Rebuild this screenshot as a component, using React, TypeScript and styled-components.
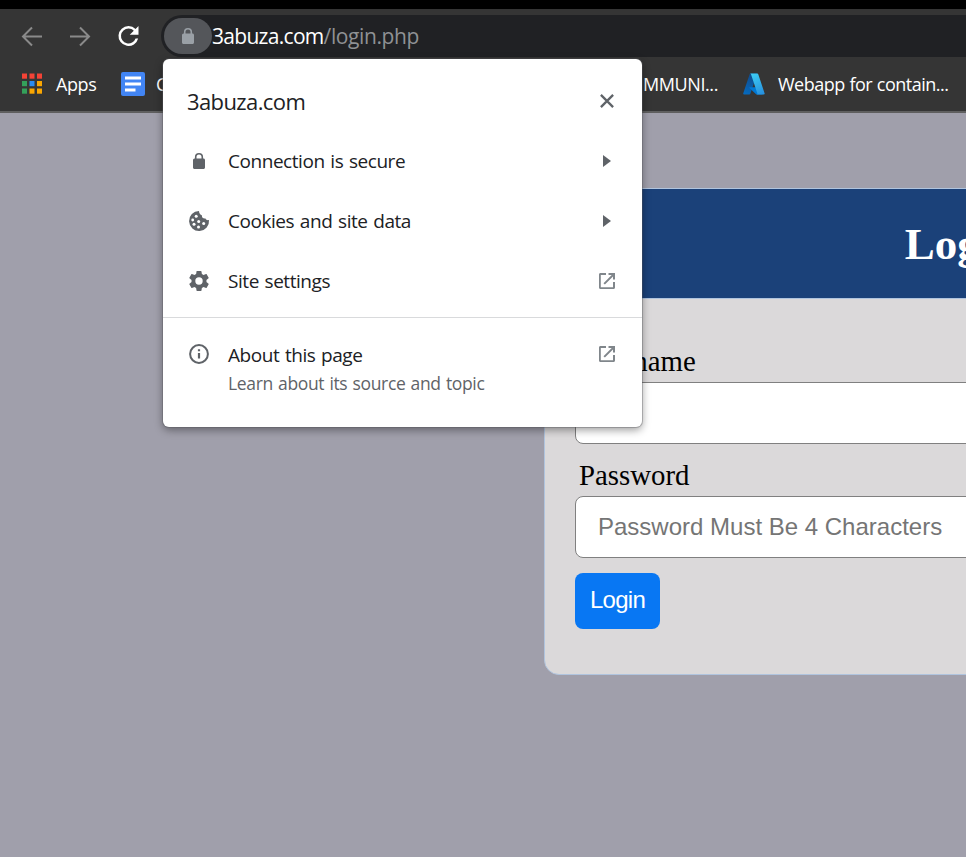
import React from "react";
import styled, { createGlobalStyle } from "styled-components";

const GlobalStyle = createGlobalStyle`
  *, *::before, *::after { box-sizing: border-box; }
  body { margin: 0; overflow: hidden; background: #a09fab; }
  svg { display: block; flex: none; }
`;

const Screen = styled.div`
  position: relative;
  display: flex;
  flex-direction: column;
  width: 966px;
  height: 857px;
  overflow: hidden;
  background: #a09fab;
  font-family: "Open Sans", "Noto Sans", sans-serif;
`;

const TitleStrip = styled.div`
  flex: none;
  height: 9px;
  background: #000;
`;

const Toolbar = styled.div`
  flex: none;
  display: flex;
  height: 48px;
  padding-top: 6px;
  background: #353535;
`;

const NavButtons = styled.div`
  display: flex;
  align-items: center;
  gap: 24px;
  width: 161px;
  padding: 0 0 1px 20px;
`;

const AddressBar = styled.div`
  flex: 1;
  display: flex;
  align-items: center;
  padding-left: 3px;
  background: #202124;
  border-radius: 21px 0 0 21px;
`;

const SiteChip = styled.div`
  display: flex;
  align-items: center;
  justify-content: center;
  width: 48px;
  height: 36px;
  border-radius: 18px;
  background: #54565a;
`;

const Text = styled.span<{ $size: number; $spacing?: number; $word?: number; $color?: string }>`
  font-size: ${(p) => p.$size}px;
  letter-spacing: ${(p) => p.$spacing ?? 0}px;
  word-spacing: ${(p) => p.$word ?? 0}px;
  color: ${(p) => p.$color ?? "#202124"};
  white-space: nowrap;
`;

const Bookmarks = styled.div`
  flex: none;
  display: flex;
  align-items: center;
  height: 56px;
  padding-left: 20px;
  background: #353535;
  border-bottom: 2px solid #5f5f5f;
`;

const Bookmark = styled.div<{ $width: number; $gap?: number }>`
  flex: none;
  display: flex;
  align-items: center;
  gap: ${(p) => p.$gap ?? 12}px;
  width: ${(p) => p.$width}px;
`;

const PushedBookmark = styled(Bookmark)`
  justify-content: flex-end;
  padding-right: 25px;
`;

const Page = styled.main`
  flex: 1;
  padding: 75px 0 0 544px;
`;

const Card = styled.section`
  width: 834px;
  height: 487px;
  background: #dbd9da;
  border: 1px solid #b0c4de;
  border-radius: 0 0 15px 15px;
  font-family: "Liberation Serif", serif;
`;

const CardHeader = styled.h2`
  display: flex;
  align-items: center;
  justify-content: center;
  height: 110px;
  margin: 0;
  border-bottom: 1px solid #b0c4de;
  background: #1b4179;
  color: #fff;
  font-size: 45px;
`;

const Form = styled.div`
  display: flex;
  flex-direction: column;
  align-items: flex-start;
  padding: 46px 30px 0;
`;

const Field = styled.label`
  display: flex;
  flex-direction: column;
  width: 100%;
  margin-bottom: 15px;
`;

const FieldName = styled.span`
  height: 37px;
  padding-left: 4px;
  font-size: 28.8px;
  line-height: 33px;
  color: #000;
`;

const Input = styled.input`
  width: 100%;
  height: 62px;
  padding: 0 22px;
  border: 1px solid #808080;
  border-radius: 8px;
  background: #fff;
  font: 24px "Liberation Sans", sans-serif;
  &::placeholder { color: #757575; }
`;

const LoginButton = styled.button`
  width: 85px;
  height: 56px;
  padding: 0 0 2px;
  border: 0;
  border-radius: 8px;
  background: #0877f3;
  color: #fff;
  font: 24px "Liberation Sans", sans-serif;
  letter-spacing: -0.7px;
`;

const Popup = styled.aside`
  position: absolute;
  left: 163px;
  top: 59px;
  width: 479px;
  height: 368px;
  background: #fff;
  border-radius: 6px;
  box-shadow: 0 0 0 1px rgba(90, 90, 95, 0.35), 0 3px 8px rgba(0, 0, 0, 0.4);
`;

const PopupTitle = styled.div`
  display: flex;
  align-items: center;
  justify-content: space-between;
  height: 72px;
  padding: 11px 28px 0 24px;
`;

const MenuRow = styled.div`
  display: grid;
  grid-template-columns: 24px 1fr 24px;
  column-gap: 18px;
  align-items: center;
  height: 60px;
  padding: 0 23px 0 24px;
`;

const AboutRow = styled(MenuRow)`
  & > svg { margin-bottom: 2px; }
`;

const RowText = styled(Text).attrs({ $size: 19, $spacing: -0.45, $word: 1.2 })`
  margin-left: -1px;
`;

const Divider = styled.div`
  height: 1px;
  margin-top: 6px;
  background: #d9dadc;
`;

const AboutSection = styled.div`
  padding-top: 7px;
`;

const Subline = styled.div`
  display: flex;
  margin-top: -14px;
  padding-left: 65px;
`;

const Centered = styled.span`
  display: flex;
  justify-content: center;
`;

const Arrow = ({ back }: { back?: boolean }) => (
  <svg width="24" height="24" viewBox="0 0 24 24" fill="none" stroke="#8a8a8a" strokeWidth="2">
    {back ? <path d="M22 12.500H3.500M12 3.500L3 12.500L12 21.500" /> : <path d="M2 12.500H20.500M12 3.500L21 12.500L12 21.500" />}
  </svg>
);

const Reload = () => (
  <svg width="25" height="30" viewBox="2 0 20 24" fill="#fff">
    <path d="M17.650 6.350A7.960 7.960 0 0 0 12 4a8 8 0 1 0 7.730 10h-2.080A6 6 0 1 1 12 6c1.660 0 3.140.69 4.220 1.780L13 11h7V4z" />
  </svg>
);

const Lock = ({ color }: { color: string }) => (
  <svg width="24" height="24" viewBox="0 0 24 24" fill={color}>
    <path d="M16.500 9.400h-.4V8a4.100 4.100 0 0 0-8.200 0v1.400h-.4A1.500 1.500 0 0 0 6 10.900v7.600c0 .8.700 1.500 1.500 1.500h9c.8 0 1.500-.7 1.500-1.500v-7.600c0-.8-.7-1.500-1.500-1.500zM9.500 9.400V8a2.500 2.500 0 0 1 5 0v1.400z" />
  </svg>
);

const appColors = ["#f44336", "#f44336", "#f44336", "#34a05a", "#2a8bf2", "#f9a602", "#34a05a", "#f9a602", "#f9a602"];
const AppsIcon = () => (
  <svg width="24" height="24" viewBox="0 0 24 24">
    {appColors.map((c, i) => (
      <rect key={i} x={2 + (i % 3) * 7.5} y={1.5 + Math.floor(i / 3) * 7.5} width="5" height="5.2" fill={c} />
    ))}
  </svg>
);

const DocsIcon = () => (
  <svg width="24" height="24" viewBox="0 0 24 24">
    <rect width="24" height="24" rx="2" fill="#4285f4" />
    <path d="M4 4.400h16v3H4zM4 10.600h16v3H4zM4 16.600h10.500v3H4z" fill="#fff" />
  </svg>
);

const AzureIcon = () => (
  <svg width="22" height="22" viewBox="0 0 96 96">
    <defs>
      <linearGradient id="azLeft" x1="0.6" y1="0" x2="0.3" y2="1">
        <stop offset="0" stopColor="#114a8b" />
        <stop offset="1" stopColor="#0669bc" />
      </linearGradient>
      <linearGradient id="azRight" x1="0.3" y1="0" x2="0.7" y2="1">
        <stop offset="0" stopColor="#3ccbf4" />
        <stop offset="1" stopColor="#2892df" />
      </linearGradient>
    </defs>
    <path d="M33.3 2h28.5L32 91a4.5 4.5 0 0 1-4.3 3H5.500a4.500 4.500 0 0 1-4.300-6L29 5a4.500 4.500 0 0 1 4.300-3z" fill="url(#azLeft)" />
    <path d="M74.700 62H29.600a2 2 0 0 0-1.400 3.500L57.200 93a4.500 4.500 0 0 0 3 1.200h25.500z" fill="#0078d4" />
    <path d="M66.600 5a4.500 4.500 0 0 0-4.300-3H30.600a4.500 4.500 0 0 1 4.300 3l27.500 83a4.500 4.500 0 0 1-4.300 6h31.700a4.500 4.500 0 0 0 4.300-6z" fill="url(#azRight)" />
  </svg>
);

const Close = () => (
  <svg width="14" height="14" viewBox="0 0 14 14" fill="none" stroke="#5f6368" strokeWidth="2.3">
    <path d="M.9.9l12.200 12.200M13.100.9L.9 13.100" />
  </svg>
);

const Caret = () => (
  <svg width="8" height="12" viewBox="0 0 8 12" fill="#5f6368">
    <path d="M0 0l8 6-8 6z" />
  </svg>
);

const External = () => (
  <svg width="24" height="24" viewBox="0 0 24 24" fill="#80868b">
    <path d="M18 18.200H5.800V6H11V4H5.500C4.600 4 4 4.600 4 5.500v13c0 .9.600 1.500 1.500 1.500h13c.9 0 1.500-.6 1.500-1.500V13h-2zM13.500 4v2h3.200l-8.200 8.200 1.400 1.400L18 7.400v3.100h2V4z" />
  </svg>
);

const Cookie = () => (
  <svg width="24" height="24" viewBox="-1 -1 24 24">
    <path d="M11 1a10 10 0 1 0 10 9c-1.500.4-3 0-3.500-1.500-2 .5-4-1-3.500-3C12.200 5 11 3 11 1z" fill="#5f6368" />
    <g fill="#fff">
      <circle cx="8.200" cy="6.200" r="1.500" />
      <circle cx="4.700" cy="10" r="1.400" />
      <circle cx="10.700" cy="11.500" r="1.500" />
      <circle cx="6" cy="14.200" r="1.500" />
      <circle cx="10.500" cy="17" r="1.500" />
      <circle cx="15.700" cy="13.500" r="1.500" />
    </g>
  </svg>
);

const Gear = () => (
  <svg width="24" height="24" viewBox="0 0 24 24" fill="#5f6368">
    <path d="M19.430 12.980c.04-.32.07-.64.07-.98s-.03-.66-.07-.98l2.110-1.650c.19-.15.24-.42.12-.64l-2-3.460c-.12-.22-.39-.3-.61-.22l-2.490 1c-.52-.4-1.080-.73-1.690-.98l-.38-2.650A.488.488 0 0 0 14 2h-4c-.25 0-.46.18-.49.42l-.38 2.650c-.61.25-1.170.59-1.690.98l-2.490-1c-.23-.09-.49 0-.61.22l-2 3.460c-.13.22-.07.49.12.64l2.110 1.650c-.04.32-.07.65-.07.98s.03.66.07.98l-2.110 1.650c-.19.15-.24.42-.12.64l2 3.460c.12.22.39.3.61.22l2.490-1c.52.4 1.080.73 1.690.98l.38 2.650c.03.24.24.42.49.42h4c.25 0 .46-.18.49-.42l.38-2.650c.61-.25 1.170-.59 1.690-.98l2.490 1c.23.09.49 0 .61-.22l2-3.460c.12-.22.07-.49-.12-.64zM12 15.700a3.700 3.700 0 1 1 0-7.400 3.700 3.700 0 0 1 0 7.400z" />
  </svg>
);

const Info = () => (
  <svg width="24" height="24" viewBox="-1 -1 24 24" fill="none" stroke="#5f6368">
    <circle cx="11" cy="11" r="8.900" strokeWidth="2" />
    <path d="M11 10v5.500M11 6.200v2" strokeWidth="2.200" />
  </svg>
);

export default function App() {
  return (
    <>
      <GlobalStyle />
      <Screen>
        <TitleStrip />
        <Toolbar>
          <NavButtons>
            <Arrow back />
            <Arrow />
            <Reload />
          </NavButtons>
          <AddressBar>
            <SiteChip>
              <Lock color="#9aa0a6" />
            </SiteChip>
            <Text $size={21} $spacing={-0.7} $color="#fff">3abuza.com</Text>
            <Text $size={21} $spacing={-0.4} $color="#8f9194">/login.php</Text>
          </AddressBar>
        </Toolbar>
        <Bookmarks>
          <Bookmark $width={101}>
            <AppsIcon />
            <Text $size={18} $spacing={-0.4} $color="#fff">Apps</Text>
          </Bookmark>
          <Bookmark $width={60} $gap={11}>
            <DocsIcon />
            <Text $size={18} $color="#fff">C</Text>
          </Bookmark>
          <PushedBookmark $width={562}>
            <Text $size={18} $spacing={-0.4} $color="#fff">MMUNI...</Text>
          </PushedBookmark>
          <Bookmark $width={230} $gap={13}>
            <AzureIcon />
            <Text $size={18} $spacing={-0.5} $word={0.5} $color="#fff">Webapp for contain...</Text>
          </Bookmark>
        </Bookmarks>
        <Page>
          <Card>
            <CardHeader>Login</CardHeader>
            <Form>
              <Field>
                <FieldName>Username</FieldName>
                <Input />
              </Field>
              <Field>
                <FieldName>Password</FieldName>
                <Input placeholder="Password Must Be 4 Characters" />
              </Field>
              <LoginButton>Login</LoginButton>
            </Form>
          </Card>
        </Page>
        <Popup>
          <PopupTitle>
            <Text $size={22} $spacing={-0.6}>3abuza.com</Text>
            <Close />
          </PopupTitle>
          <MenuRow>
            <Lock color="#5f6368" />
            <RowText>Connection is secure</RowText>
            <Centered><Caret /></Centered>
          </MenuRow>
          <MenuRow>
            <Cookie />
            <RowText>Cookies and site data</RowText>
            <Centered><Caret /></Centered>
          </MenuRow>
          <MenuRow>
            <Gear />
            <RowText>Site settings</RowText>
            <External />
          </MenuRow>
          <Divider />
          <AboutSection>
            <AboutRow>
              <Info />
              <RowText>About this page</RowText>
              <External />
            </AboutRow>
            <Subline>
              <Text $size={17.5} $spacing={-0.35} $word={1} $color="#5f6368">Learn about its source and topic</Text>
            </Subline>
          </AboutSection>
        </Popup>
      </Screen>
    </>
  );
}
